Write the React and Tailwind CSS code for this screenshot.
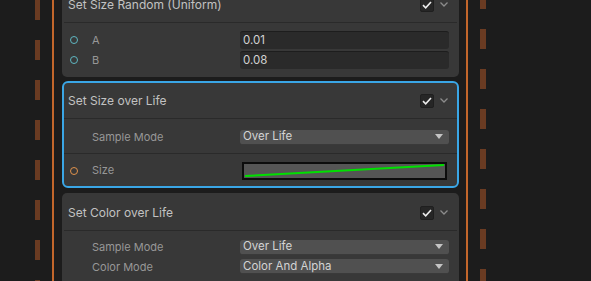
import { useMemo } from 'react';

// dashed guide column, period 40px (20 on / 20 off)
const Dashes = ({ offset = 0, width = 'w-[5px]' }) => {
  const items = useMemo(() => Array.from({ length: 9 }), []);
  return (
    <div className={`${width} shrink-0 flex flex-col`} style={{ marginTop: offset }}>
      {items.map((_, i) => (
        <div key={i} className="h-[20px] mb-[20px] shrink-0 bg-[#6a3b22]" />
      ))}
    </div>
  );
};

const Check = () => (
  <div className="w-[14px] h-[14px] rounded-[2px] bg-[#262626] border border-[#1f1f1f] flex items-center justify-center">
    <svg width="10" height="8" viewBox="0 0 10 8" fill="none">
      <polyline points="1,4.2 3.7,6.8 9,1" stroke="#ececec" strokeWidth="1.6" />
    </svg>
  </div>
);

const Chevron = () => (
  <svg width="8" height="5" viewBox="0 0 8 5" fill="none" className="ml-[6px]">
    <polyline points="0.5,0.5 4,4 7.5,0.5" stroke="#8c8c8c" strokeWidth="1.3" />
  </svg>
);

const Header = ({ title }) => (
  <div className="h-[36px] flex items-center pl-[4px] pr-[9px] border-b border-[#2a2a2a]">
    <span className="flex-1 text-[12px] text-[#c2c2c2]">{title}</span>
    <Check />
    <Chevron />
  </div>
);

const Dot = ({ color }) => (
  <div className="w-[8px] h-[8px] ml-[6px]">
    {color && <div className={`w-[8px] h-[8px] rounded-full border-[1.5px] ${color}`} />}
  </div>
);

const Label = ({ dot, text }) => (
  <div className="w-[176px] shrink-0 flex items-center">
    <Dot color={dot} />
    <span className="ml-[14px] text-[11px] text-[#979797]">{text}</span>
  </div>
);

const Field = ({ value }) => (
  <div className="flex-1 mr-[8px] h-[18px] rounded-[3px] bg-[#2a2a2a] border-t border-[#1d1d1d] flex items-center pl-[3px] text-[11.5px] text-[#d2d2d2]">
    {value}
  </div>
);

const Dropdown = ({ value }) => (
  <div className="flex-1 mr-[8px] h-[15px] rounded-[3px] bg-[#505050] border-b border-[#3a3a3a] flex items-center pl-[3px] pr-[6px] text-[11.5px] text-[#d4d4d4]">
    <span className="flex-1">{value}</span>
    <svg width="8" height="5" viewBox="0 0 8 5">
      <polygon points="0,0 8,0 4,5" fill="#c4c4c4" />
    </svg>
  </div>
);

const Curve = () => (
  <div className="flex-1 ml-[2px] mr-[10px] h-[18px] border-2 border-[#0c0c0c] bg-[#555555]">
    <svg width="100%" height="100%" viewBox="0 0 200 14" preserveAspectRatio="none">
      <line x1="1" y1="12" x2="199" y2="1" stroke="#00e000" strokeWidth="2" />
    </svg>
  </div>
);

const App = () => {
  return (
    <div className="h-[281px] w-[591px] overflow-hidden bg-[#1c1c1c] flex font-['Inter',sans-serif]">
      <div className="w-[35px] shrink-0" />
      <Dashes />
      <div className="w-[2px] shrink-0 ml-[12px] bg-[#c2662b]" />

      <div className="w-[397px] shrink-0 ml-[8px] -mt-[15px] flex flex-col gap-[4px]">
        <div className="rounded-[5px] border-2 border-transparent bg-[#383838]">
          <Header title="Set Size Random (Uniform)" />
          <div className="pt-[8px] pb-[6px] flex flex-col gap-[2px]">
            <div className="flex items-center">
              <Label dot="border-[#5fb7c2]" text="A" />
              <Field value="0.01" />
            </div>
            <div className="flex items-center">
              <Label dot="border-[#5fb7c2]" text="B" />
              <Field value="0.08" />
            </div>
          </div>
        </div>

        <div className="rounded-[6px] border-2 border-[#3aa6e6] bg-[#383838]">
          <Header title="Set Size over Life" />
          <div className="h-[35px] pt-[2px] flex items-center border-b border-[#2a2a2a]">
            <Label text="Sample Mode" />
            <Dropdown value="Over Life" />
          </div>
          <div className="h-[32px] pt-[1px] flex items-center">
            <Label dot="border-[#e0924c]" text="Size" />
            <Curve />
          </div>
        </div>

        <div className="mt-[1px] rounded-[5px] border-2 border-transparent bg-[#383838]">
          <Header title="Set Color over Life" />
          <div className="pt-[8px] pb-[8px] flex flex-col gap-[3px]">
            <div className="flex items-center">
              <Label text="Sample Mode" />
              <Dropdown value="Over Life" />
            </div>
            <div className="flex items-center">
              <Label text="Color Mode" />
              <Dropdown value="Color And Alpha" />
            </div>
          </div>
        </div>
      </div>

      <div className="w-[2px] shrink-0 ml-[7px] bg-[#c2662b]" />
      <div className="w-[12px] shrink-0" />
      <Dashes offset={-11} width="w-[6px]" />
    </div>
  );
};

export default App;
